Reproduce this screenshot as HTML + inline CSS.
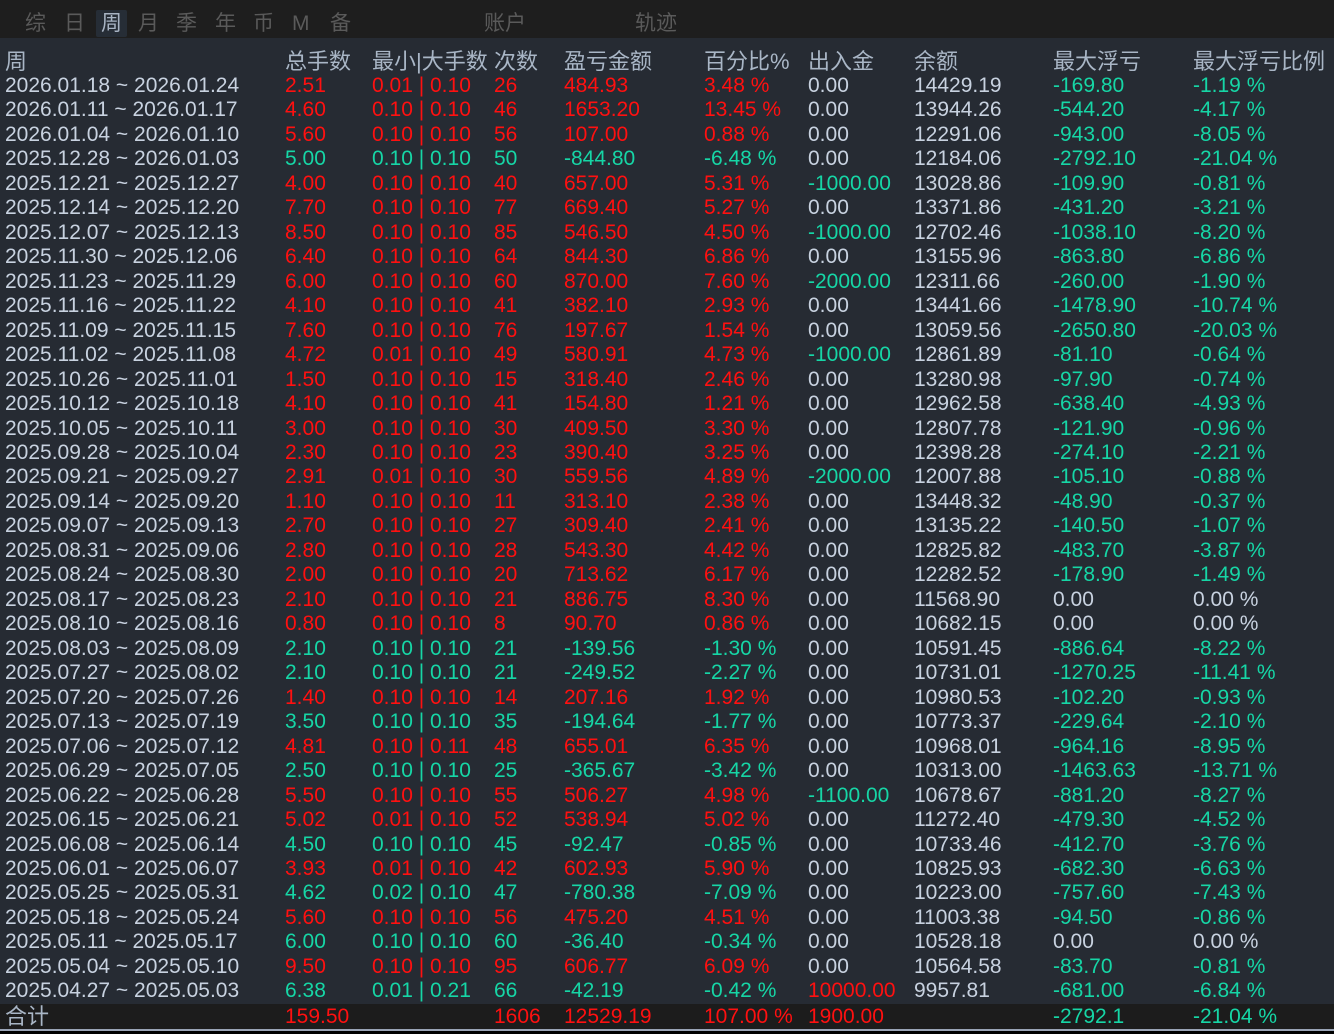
<!DOCTYPE html><html><head><meta charset="utf-8"><style>
body{margin:0;width:1334px;height:1034px;background:#000;overflow:hidden;font-family:"Liberation Sans","Noto Sans CJK SC",sans-serif;}
.top{position:absolute;left:0;top:0;width:1334px;height:38px;background:#1e1e1e;}
.tab{position:absolute;top:10px;font-size:21px;color:#5a5a5a;line-height:27px;}
.sel{background:#262d36;color:#a8b4c4;padding:0 5px;border-radius:2px}
.tbl{position:absolute;left:0;top:38px;width:1334px;height:966px;background:#262b33;}
.rows{position:absolute;left:0;top:49.5px;}
.row{height:24.47px;line-height:24.47px;font-size:21px;color:#c8d2e0;white-space:nowrap;position:relative;width:1334px}
.row span{position:absolute;top:0}
.h{color:#a9b6c6;font-size:22px}
.c0{left:5px}.c1{left:285px}.c2{left:372px}.c3{left:494px}.c4{left:564px}.c5{left:704px}.c6{left:808px}.c7{left:914px}.c8{left:1053px}.c9{left:1193px}
.r{color:#ff1010}.g{color:#16d6a6}
.tot{position:absolute;left:0;top:1004px;width:1334px;height:25px;background:#1c1c1c;}
.tot .row{line-height:26px}
.line{position:absolute;left:0;top:1029px;width:1334px;height:2px;background:#9aa4b6}
</style></head><body>
<div class="top">
<span class="tab" style="left:25px">综</span><span class="tab" style="left:64px">日</span><span class="tab sel" style="left:96px">周</span><span class="tab" style="left:138px">月</span><span class="tab" style="left:176px">季</span><span class="tab" style="left:215px">年</span><span class="tab" style="left:253px">币</span><span class="tab" style="left:292px">M</span><span class="tab" style="left:330px">备</span><span class="tab" style="left:484px">账户</span><span class="tab" style="left:635px">轨迹</span>
</div>
<div class="tbl"></div>
<div class="rows">
<div class="row h"><span class="c0">周</span><span class="c1">总手数</span><span class="c2">最小|大手数</span><span class="c3">次数</span><span class="c4">盈亏金额</span><span class="c5">百分比%</span><span class="c6">出入金</span><span class="c7">余额</span><span class="c8">最大浮亏</span><span class="c9">最大浮亏比例</span></div>
<div class="row"><span class="c0">2026.01.18 ~ 2026.01.24</span><span class="c1 r">2.51</span><span class="c2 r">0.01 | 0.10</span><span class="c3 r">26</span><span class="c4 r">484.93</span><span class="c5 r">3.48 %</span><span class="c6">0.00</span><span class="c7">14429.19</span><span class="c8 g">-169.80</span><span class="c9 g">-1.19 %</span></div>
<div class="row"><span class="c0">2026.01.11 ~ 2026.01.17</span><span class="c1 r">4.60</span><span class="c2 r">0.10 | 0.10</span><span class="c3 r">46</span><span class="c4 r">1653.20</span><span class="c5 r">13.45 %</span><span class="c6">0.00</span><span class="c7">13944.26</span><span class="c8 g">-544.20</span><span class="c9 g">-4.17 %</span></div>
<div class="row"><span class="c0">2026.01.04 ~ 2026.01.10</span><span class="c1 r">5.60</span><span class="c2 r">0.10 | 0.10</span><span class="c3 r">56</span><span class="c4 r">107.00</span><span class="c5 r">0.88 %</span><span class="c6">0.00</span><span class="c7">12291.06</span><span class="c8 g">-943.00</span><span class="c9 g">-8.05 %</span></div>
<div class="row"><span class="c0">2025.12.28 ~ 2026.01.03</span><span class="c1 g">5.00</span><span class="c2 g">0.10 | 0.10</span><span class="c3 g">50</span><span class="c4 g">-844.80</span><span class="c5 g">-6.48 %</span><span class="c6">0.00</span><span class="c7">12184.06</span><span class="c8 g">-2792.10</span><span class="c9 g">-21.04 %</span></div>
<div class="row"><span class="c0">2025.12.21 ~ 2025.12.27</span><span class="c1 r">4.00</span><span class="c2 r">0.10 | 0.10</span><span class="c3 r">40</span><span class="c4 r">657.00</span><span class="c5 r">5.31 %</span><span class="c6 g">-1000.00</span><span class="c7">13028.86</span><span class="c8 g">-109.90</span><span class="c9 g">-0.81 %</span></div>
<div class="row"><span class="c0">2025.12.14 ~ 2025.12.20</span><span class="c1 r">7.70</span><span class="c2 r">0.10 | 0.10</span><span class="c3 r">77</span><span class="c4 r">669.40</span><span class="c5 r">5.27 %</span><span class="c6">0.00</span><span class="c7">13371.86</span><span class="c8 g">-431.20</span><span class="c9 g">-3.21 %</span></div>
<div class="row"><span class="c0">2025.12.07 ~ 2025.12.13</span><span class="c1 r">8.50</span><span class="c2 r">0.10 | 0.10</span><span class="c3 r">85</span><span class="c4 r">546.50</span><span class="c5 r">4.50 %</span><span class="c6 g">-1000.00</span><span class="c7">12702.46</span><span class="c8 g">-1038.10</span><span class="c9 g">-8.20 %</span></div>
<div class="row"><span class="c0">2025.11.30 ~ 2025.12.06</span><span class="c1 r">6.40</span><span class="c2 r">0.10 | 0.10</span><span class="c3 r">64</span><span class="c4 r">844.30</span><span class="c5 r">6.86 %</span><span class="c6">0.00</span><span class="c7">13155.96</span><span class="c8 g">-863.80</span><span class="c9 g">-6.86 %</span></div>
<div class="row"><span class="c0">2025.11.23 ~ 2025.11.29</span><span class="c1 r">6.00</span><span class="c2 r">0.10 | 0.10</span><span class="c3 r">60</span><span class="c4 r">870.00</span><span class="c5 r">7.60 %</span><span class="c6 g">-2000.00</span><span class="c7">12311.66</span><span class="c8 g">-260.00</span><span class="c9 g">-1.90 %</span></div>
<div class="row"><span class="c0">2025.11.16 ~ 2025.11.22</span><span class="c1 r">4.10</span><span class="c2 r">0.10 | 0.10</span><span class="c3 r">41</span><span class="c4 r">382.10</span><span class="c5 r">2.93 %</span><span class="c6">0.00</span><span class="c7">13441.66</span><span class="c8 g">-1478.90</span><span class="c9 g">-10.74 %</span></div>
<div class="row"><span class="c0">2025.11.09 ~ 2025.11.15</span><span class="c1 r">7.60</span><span class="c2 r">0.10 | 0.10</span><span class="c3 r">76</span><span class="c4 r">197.67</span><span class="c5 r">1.54 %</span><span class="c6">0.00</span><span class="c7">13059.56</span><span class="c8 g">-2650.80</span><span class="c9 g">-20.03 %</span></div>
<div class="row"><span class="c0">2025.11.02 ~ 2025.11.08</span><span class="c1 r">4.72</span><span class="c2 r">0.01 | 0.10</span><span class="c3 r">49</span><span class="c4 r">580.91</span><span class="c5 r">4.73 %</span><span class="c6 g">-1000.00</span><span class="c7">12861.89</span><span class="c8 g">-81.10</span><span class="c9 g">-0.64 %</span></div>
<div class="row"><span class="c0">2025.10.26 ~ 2025.11.01</span><span class="c1 r">1.50</span><span class="c2 r">0.10 | 0.10</span><span class="c3 r">15</span><span class="c4 r">318.40</span><span class="c5 r">2.46 %</span><span class="c6">0.00</span><span class="c7">13280.98</span><span class="c8 g">-97.90</span><span class="c9 g">-0.74 %</span></div>
<div class="row"><span class="c0">2025.10.12 ~ 2025.10.18</span><span class="c1 r">4.10</span><span class="c2 r">0.10 | 0.10</span><span class="c3 r">41</span><span class="c4 r">154.80</span><span class="c5 r">1.21 %</span><span class="c6">0.00</span><span class="c7">12962.58</span><span class="c8 g">-638.40</span><span class="c9 g">-4.93 %</span></div>
<div class="row"><span class="c0">2025.10.05 ~ 2025.10.11</span><span class="c1 r">3.00</span><span class="c2 r">0.10 | 0.10</span><span class="c3 r">30</span><span class="c4 r">409.50</span><span class="c5 r">3.30 %</span><span class="c6">0.00</span><span class="c7">12807.78</span><span class="c8 g">-121.90</span><span class="c9 g">-0.96 %</span></div>
<div class="row"><span class="c0">2025.09.28 ~ 2025.10.04</span><span class="c1 r">2.30</span><span class="c2 r">0.10 | 0.10</span><span class="c3 r">23</span><span class="c4 r">390.40</span><span class="c5 r">3.25 %</span><span class="c6">0.00</span><span class="c7">12398.28</span><span class="c8 g">-274.10</span><span class="c9 g">-2.21 %</span></div>
<div class="row"><span class="c0">2025.09.21 ~ 2025.09.27</span><span class="c1 r">2.91</span><span class="c2 r">0.01 | 0.10</span><span class="c3 r">30</span><span class="c4 r">559.56</span><span class="c5 r">4.89 %</span><span class="c6 g">-2000.00</span><span class="c7">12007.88</span><span class="c8 g">-105.10</span><span class="c9 g">-0.88 %</span></div>
<div class="row"><span class="c0">2025.09.14 ~ 2025.09.20</span><span class="c1 r">1.10</span><span class="c2 r">0.10 | 0.10</span><span class="c3 r">11</span><span class="c4 r">313.10</span><span class="c5 r">2.38 %</span><span class="c6">0.00</span><span class="c7">13448.32</span><span class="c8 g">-48.90</span><span class="c9 g">-0.37 %</span></div>
<div class="row"><span class="c0">2025.09.07 ~ 2025.09.13</span><span class="c1 r">2.70</span><span class="c2 r">0.10 | 0.10</span><span class="c3 r">27</span><span class="c4 r">309.40</span><span class="c5 r">2.41 %</span><span class="c6">0.00</span><span class="c7">13135.22</span><span class="c8 g">-140.50</span><span class="c9 g">-1.07 %</span></div>
<div class="row"><span class="c0">2025.08.31 ~ 2025.09.06</span><span class="c1 r">2.80</span><span class="c2 r">0.10 | 0.10</span><span class="c3 r">28</span><span class="c4 r">543.30</span><span class="c5 r">4.42 %</span><span class="c6">0.00</span><span class="c7">12825.82</span><span class="c8 g">-483.70</span><span class="c9 g">-3.87 %</span></div>
<div class="row"><span class="c0">2025.08.24 ~ 2025.08.30</span><span class="c1 r">2.00</span><span class="c2 r">0.10 | 0.10</span><span class="c3 r">20</span><span class="c4 r">713.62</span><span class="c5 r">6.17 %</span><span class="c6">0.00</span><span class="c7">12282.52</span><span class="c8 g">-178.90</span><span class="c9 g">-1.49 %</span></div>
<div class="row"><span class="c0">2025.08.17 ~ 2025.08.23</span><span class="c1 r">2.10</span><span class="c2 r">0.10 | 0.10</span><span class="c3 r">21</span><span class="c4 r">886.75</span><span class="c5 r">8.30 %</span><span class="c6">0.00</span><span class="c7">11568.90</span><span class="c8">0.00</span><span class="c9">0.00 %</span></div>
<div class="row"><span class="c0">2025.08.10 ~ 2025.08.16</span><span class="c1 r">0.80</span><span class="c2 r">0.10 | 0.10</span><span class="c3 r">8</span><span class="c4 r">90.70</span><span class="c5 r">0.86 %</span><span class="c6">0.00</span><span class="c7">10682.15</span><span class="c8">0.00</span><span class="c9">0.00 %</span></div>
<div class="row"><span class="c0">2025.08.03 ~ 2025.08.09</span><span class="c1 g">2.10</span><span class="c2 g">0.10 | 0.10</span><span class="c3 g">21</span><span class="c4 g">-139.56</span><span class="c5 g">-1.30 %</span><span class="c6">0.00</span><span class="c7">10591.45</span><span class="c8 g">-886.64</span><span class="c9 g">-8.22 %</span></div>
<div class="row"><span class="c0">2025.07.27 ~ 2025.08.02</span><span class="c1 g">2.10</span><span class="c2 g">0.10 | 0.10</span><span class="c3 g">21</span><span class="c4 g">-249.52</span><span class="c5 g">-2.27 %</span><span class="c6">0.00</span><span class="c7">10731.01</span><span class="c8 g">-1270.25</span><span class="c9 g">-11.41 %</span></div>
<div class="row"><span class="c0">2025.07.20 ~ 2025.07.26</span><span class="c1 r">1.40</span><span class="c2 r">0.10 | 0.10</span><span class="c3 r">14</span><span class="c4 r">207.16</span><span class="c5 r">1.92 %</span><span class="c6">0.00</span><span class="c7">10980.53</span><span class="c8 g">-102.20</span><span class="c9 g">-0.93 %</span></div>
<div class="row"><span class="c0">2025.07.13 ~ 2025.07.19</span><span class="c1 g">3.50</span><span class="c2 g">0.10 | 0.10</span><span class="c3 g">35</span><span class="c4 g">-194.64</span><span class="c5 g">-1.77 %</span><span class="c6">0.00</span><span class="c7">10773.37</span><span class="c8 g">-229.64</span><span class="c9 g">-2.10 %</span></div>
<div class="row"><span class="c0">2025.07.06 ~ 2025.07.12</span><span class="c1 r">4.81</span><span class="c2 r">0.10 | 0.11</span><span class="c3 r">48</span><span class="c4 r">655.01</span><span class="c5 r">6.35 %</span><span class="c6">0.00</span><span class="c7">10968.01</span><span class="c8 g">-964.16</span><span class="c9 g">-8.95 %</span></div>
<div class="row"><span class="c0">2025.06.29 ~ 2025.07.05</span><span class="c1 g">2.50</span><span class="c2 g">0.10 | 0.10</span><span class="c3 g">25</span><span class="c4 g">-365.67</span><span class="c5 g">-3.42 %</span><span class="c6">0.00</span><span class="c7">10313.00</span><span class="c8 g">-1463.63</span><span class="c9 g">-13.71 %</span></div>
<div class="row"><span class="c0">2025.06.22 ~ 2025.06.28</span><span class="c1 r">5.50</span><span class="c2 r">0.10 | 0.10</span><span class="c3 r">55</span><span class="c4 r">506.27</span><span class="c5 r">4.98 %</span><span class="c6 g">-1100.00</span><span class="c7">10678.67</span><span class="c8 g">-881.20</span><span class="c9 g">-8.27 %</span></div>
<div class="row"><span class="c0">2025.06.15 ~ 2025.06.21</span><span class="c1 r">5.02</span><span class="c2 r">0.01 | 0.10</span><span class="c3 r">52</span><span class="c4 r">538.94</span><span class="c5 r">5.02 %</span><span class="c6">0.00</span><span class="c7">11272.40</span><span class="c8 g">-479.30</span><span class="c9 g">-4.52 %</span></div>
<div class="row"><span class="c0">2025.06.08 ~ 2025.06.14</span><span class="c1 g">4.50</span><span class="c2 g">0.10 | 0.10</span><span class="c3 g">45</span><span class="c4 g">-92.47</span><span class="c5 g">-0.85 %</span><span class="c6">0.00</span><span class="c7">10733.46</span><span class="c8 g">-412.70</span><span class="c9 g">-3.76 %</span></div>
<div class="row"><span class="c0">2025.06.01 ~ 2025.06.07</span><span class="c1 r">3.93</span><span class="c2 r">0.01 | 0.10</span><span class="c3 r">42</span><span class="c4 r">602.93</span><span class="c5 r">5.90 %</span><span class="c6">0.00</span><span class="c7">10825.93</span><span class="c8 g">-682.30</span><span class="c9 g">-6.63 %</span></div>
<div class="row"><span class="c0">2025.05.25 ~ 2025.05.31</span><span class="c1 g">4.62</span><span class="c2 g">0.02 | 0.10</span><span class="c3 g">47</span><span class="c4 g">-780.38</span><span class="c5 g">-7.09 %</span><span class="c6">0.00</span><span class="c7">10223.00</span><span class="c8 g">-757.60</span><span class="c9 g">-7.43 %</span></div>
<div class="row"><span class="c0">2025.05.18 ~ 2025.05.24</span><span class="c1 r">5.60</span><span class="c2 r">0.10 | 0.10</span><span class="c3 r">56</span><span class="c4 r">475.20</span><span class="c5 r">4.51 %</span><span class="c6">0.00</span><span class="c7">11003.38</span><span class="c8 g">-94.50</span><span class="c9 g">-0.86 %</span></div>
<div class="row"><span class="c0">2025.05.11 ~ 2025.05.17</span><span class="c1 g">6.00</span><span class="c2 g">0.10 | 0.10</span><span class="c3 g">60</span><span class="c4 g">-36.40</span><span class="c5 g">-0.34 %</span><span class="c6">0.00</span><span class="c7">10528.18</span><span class="c8">0.00</span><span class="c9">0.00 %</span></div>
<div class="row"><span class="c0">2025.05.04 ~ 2025.05.10</span><span class="c1 r">9.50</span><span class="c2 r">0.10 | 0.10</span><span class="c3 r">95</span><span class="c4 r">606.77</span><span class="c5 r">6.09 %</span><span class="c6">0.00</span><span class="c7">10564.58</span><span class="c8 g">-83.70</span><span class="c9 g">-0.81 %</span></div>
<div class="row"><span class="c0">2025.04.27 ~ 2025.05.03</span><span class="c1 g">6.38</span><span class="c2 g">0.01 | 0.21</span><span class="c3 g">66</span><span class="c4 g">-42.19</span><span class="c5 g">-0.42 %</span><span class="c6 r">10000.00</span><span class="c7">9957.81</span><span class="c8 g">-681.00</span><span class="c9 g">-6.84 %</span></div>
</div>
<div class="tot"><div class="row"><span class="c0 h">合计</span><span class="c1 r">159.50</span><span class="c3 r">1606</span><span class="c4 r">12529.19</span><span class="c5 r">107.00 %</span><span class="c6 r">1900.00</span><span class="c8 g">-2792.1</span><span class="c9 g">-21.04 %</span></div></div>
<div class="line"></div>
</body></html>
